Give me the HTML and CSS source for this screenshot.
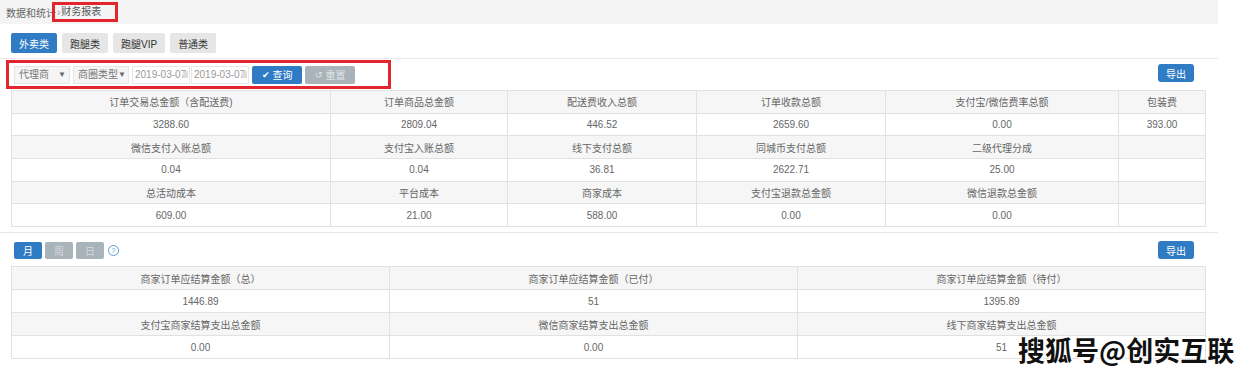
FILE: index.html
```html
<!DOCTYPE html>
<html lang="zh-CN">
<head>
    <meta charset="UTF-8">
    <title>财务报表</title>
    <link rel="stylesheet" href="styles.css">
</head>
<body>
    <div class="crumb">
        <span>数据和统计</span>
        <span class="sep">›</span>
        <span class="current">财务报表</span>
    </div>

    <div class="tabs">
        <button class="tab active">外卖类</button>
        <button class="tab">跑腿类</button>
        <button class="tab">跑腿VIP</button>
        <button class="tab">普通类</button>
    </div>

    <div class="panel">
        <div class="toolbar">
            <div class="filters">
                <div class="select"><span class="label">代理商</span><span class="caret">▼</span></div>
                <div class="select"><span class="label">商圈类型</span><span class="caret">▼</span></div>
                <div class="date"><span class="label">2019-03-07</span><span class="cal"></span></div>
                <div class="date"><span class="label">2019-03-07</span><span class="cal"></span></div>
                <button class="btn btn-blue"><span class="ico">✔</span>查询</button>
                <button class="btn btn-grey"><span class="ico">↺</span>重置</button>
            </div>
            <button class="export">导出</button>
        </div>

        <table class="grid grid-six">
            <colgroup>
                <col style="width:319px"><col style="width:177px"><col style="width:189px">
                <col style="width:189px"><col style="width:233px"><col style="width:87px">
            </colgroup>
            <tr class="head">
                <td>订单交易总金额（含配送费)</td><td>订单商品总金额</td><td>配送费收入总额</td>
                <td>订单收款总额</td><td>支付宝/微信费率总额</td><td>包装费</td>
            </tr>
            <tr>
                <td>3288.60</td><td>2809.04</td><td>446.52</td>
                <td>2659.60</td><td>0.00</td><td>393.00</td>
            </tr>
            <tr class="head">
                <td>微信支付入账总额</td><td>支付宝入账总额</td><td>线下支付总额</td>
                <td>同城币支付总额</td><td>二级代理分成</td><td></td>
            </tr>
            <tr>
                <td>0.04</td><td>0.04</td><td>36.81</td>
                <td>2622.71</td><td>25.00</td><td></td>
            </tr>
            <tr class="head">
                <td>总活动成本</td><td>平台成本</td><td>商家成本</td>
                <td>支付宝退款总金额</td><td>微信退款总金额</td><td></td>
            </tr>
            <tr>
                <td>609.00</td><td>21.00</td><td>588.00</td>
                <td>0.00</td><td>0.00</td><td></td>
            </tr>
        </table>
    </div>

    <div class="panel panel-second">
        <div class="toolbar toolbar-second">
            <div class="periods">
                <button class="period active">月</button>
                <button class="period">周</button>
                <button class="period">日</button>
                <span class="help">?</span>
            </div>
            <button class="export">导出</button>
        </div>

        <table class="grid grid-three">
            <colgroup>
                <col style="width:378px"><col style="width:408px"><col style="width:408px">
            </colgroup>
            <tr class="head">
                <td>商家订单应结算金额（总）</td><td>商家订单应结算金额（已付）</td><td>商家订单应结算金额（待付）</td>
            </tr>
            <tr>
                <td>1446.89</td><td>51</td><td>1395.89</td>
            </tr>
            <tr class="head">
                <td>支付宝商家结算支出总金额</td><td>微信商家结算支出总金额</td><td>线下商家结算支出总金额</td>
            </tr>
            <tr>
                <td>0.00</td><td>0.00</td><td>51</td>
            </tr>
        </table>
    </div>

    <div class="watermark">搜狐号@创实互联</div>
</body>
</html>
```

FILE: styles.css
```css
body {
    margin: 0;
    background: #ffffff;
    font-family: "Liberation Sans", "Noto Sans CJK SC", sans-serif;
    font-size: 10px;
    color: #666;
    position: relative;
    width: 1250px;
    height: 380px;
    overflow: hidden;
}
button {
    font-family: inherit;
    border: none;
    cursor: pointer;
}

.crumb {
    height: 24px;
    margin-right: 32px;
    background: #f4f4f4;
    display: flex;
    align-items: center;
    padding-left: 6px;
    color: #666;
}
.crumb .sep {
    margin: 0 0 0 1px;
    color: #999;
}
.crumb .current {
    border: 3px solid #e3262d;
    height: 14px;
    line-height: 14px;
    padding: 0 14px 0 6px;
    margin-left: -8px;
    color: #555;
}

.tabs {
    display: flex;
    gap: 5px;
    padding: 9px 0 0 11px;
}
.tab {
    height: 20px;
    padding: 0 8px;
    background: #e6e6e6;
    color: #333;
    font-size: 10px;
    border-radius: 2px;
}
.tab.active {
    background: #2f7cc4;
    color: #fff;
}

.panel {
    margin: 5px 32px 0 0;
    border-top: 1px solid #e8e8e8;
}
.panel-second {
    margin-top: 5px;
}

.toolbar {
    display: flex;
    justify-content: space-between;
    align-items: center;
    padding: 1px 24px 0 6px;
}
.filters {
    border: 3px solid #e3262d;
    height: 23px;
    width: 374px;
    display: flex;
    align-items: center;
    gap: 3px;
    padding-left: 5px;
}
.select, .date {
    height: 18px;
    line-height: 18px;
    border: 1px solid #e6e6e6;
    box-sizing: border-box;
    display: flex;
    align-items: center;
    white-space: nowrap;
}
.select {
    width: 56px;
    padding: 0 3px 0 4px;
    background: #f5f5f5;
    color: #777;
    justify-content: space-between;
}
.select .caret {
    font-size: 8px;
    color: #666;
}
.date {
    width: 58px;
    padding-left: 2px;
    background: #fff;
    color: #999;
    margin-right: -2px;
}
.date .cal {
    width: 5px;
    height: 7px;
    margin-left: -3px;
    background: #ddd;
}
.btn {
    height: 18px;
    width: 50px;
    font-size: 10px;
    border-radius: 2px;
    display: flex;
    align-items: center;
    justify-content: center;
    gap: 3px;
    padding: 0;
}
.btn-blue {
    background: #2f7cc4;
    color: #fff;
    margin-left: 2px;
}
.btn-grey {
    background: #aab3ba;
    color: #dfe3e6;
}
.btn .ico {
    font-size: 9px;
}

.export {
    height: 18px;
    width: 36px;
    background: #2f7cc4;
    color: #fff;
    font-size: 10px;
    border-radius: 3px;
    padding: 0;
    margin-top: -3px;
}

.grid {
    border-collapse: collapse;
    table-layout: fixed;
    width: 1194px;
    margin: 1px 0 0 11px;
}
.grid td {
    border: 1px solid #e1e1e1;
    height: 21.7px;
    text-align: center;
    padding: 0;
    color: #666;
    white-space: nowrap;
}
.grid tr.head td {
    background: #f6f6f6;
}

.toolbar-second {
    padding: 8px 24px 0 14px;
}
.toolbar-second .export {
    margin-top: 0;
}
.periods {
    display: flex;
    align-items: center;
    gap: 3px;
}
.period {
    height: 17px;
    width: 28px;
    background: #a9b3ba;
    color: #d4d9dd;
    font-size: 10px;
    border-radius: 2px;
    padding: 0;
}
.period.active {
    background: #2f7cc4;
    color: #fff;
}
.help {
    width: 9px;
    height: 9px;
    border: 1px solid #5a9ad6;
    border-radius: 50%;
    color: #5a9ad6;
    font-size: 7px;
    line-height: 9px;
    text-align: center;
    margin-left: 1px;
}
.grid-three {
    margin-top: 7px;
}
.grid-three td {
    height: 22px;
}

.watermark {
    position: absolute;
    left: 1018px;
    top: 330px;
    font-family: "Noto Sans CJK SC", sans-serif;
    font-size: 27px;
    font-weight: 700;
    color: #111;
    text-shadow: 2px 2px 0 #fff, -1px -1px 0 #fff, 1px -1px 0 #fff, -1px 1px 0 #fff;
}
```
